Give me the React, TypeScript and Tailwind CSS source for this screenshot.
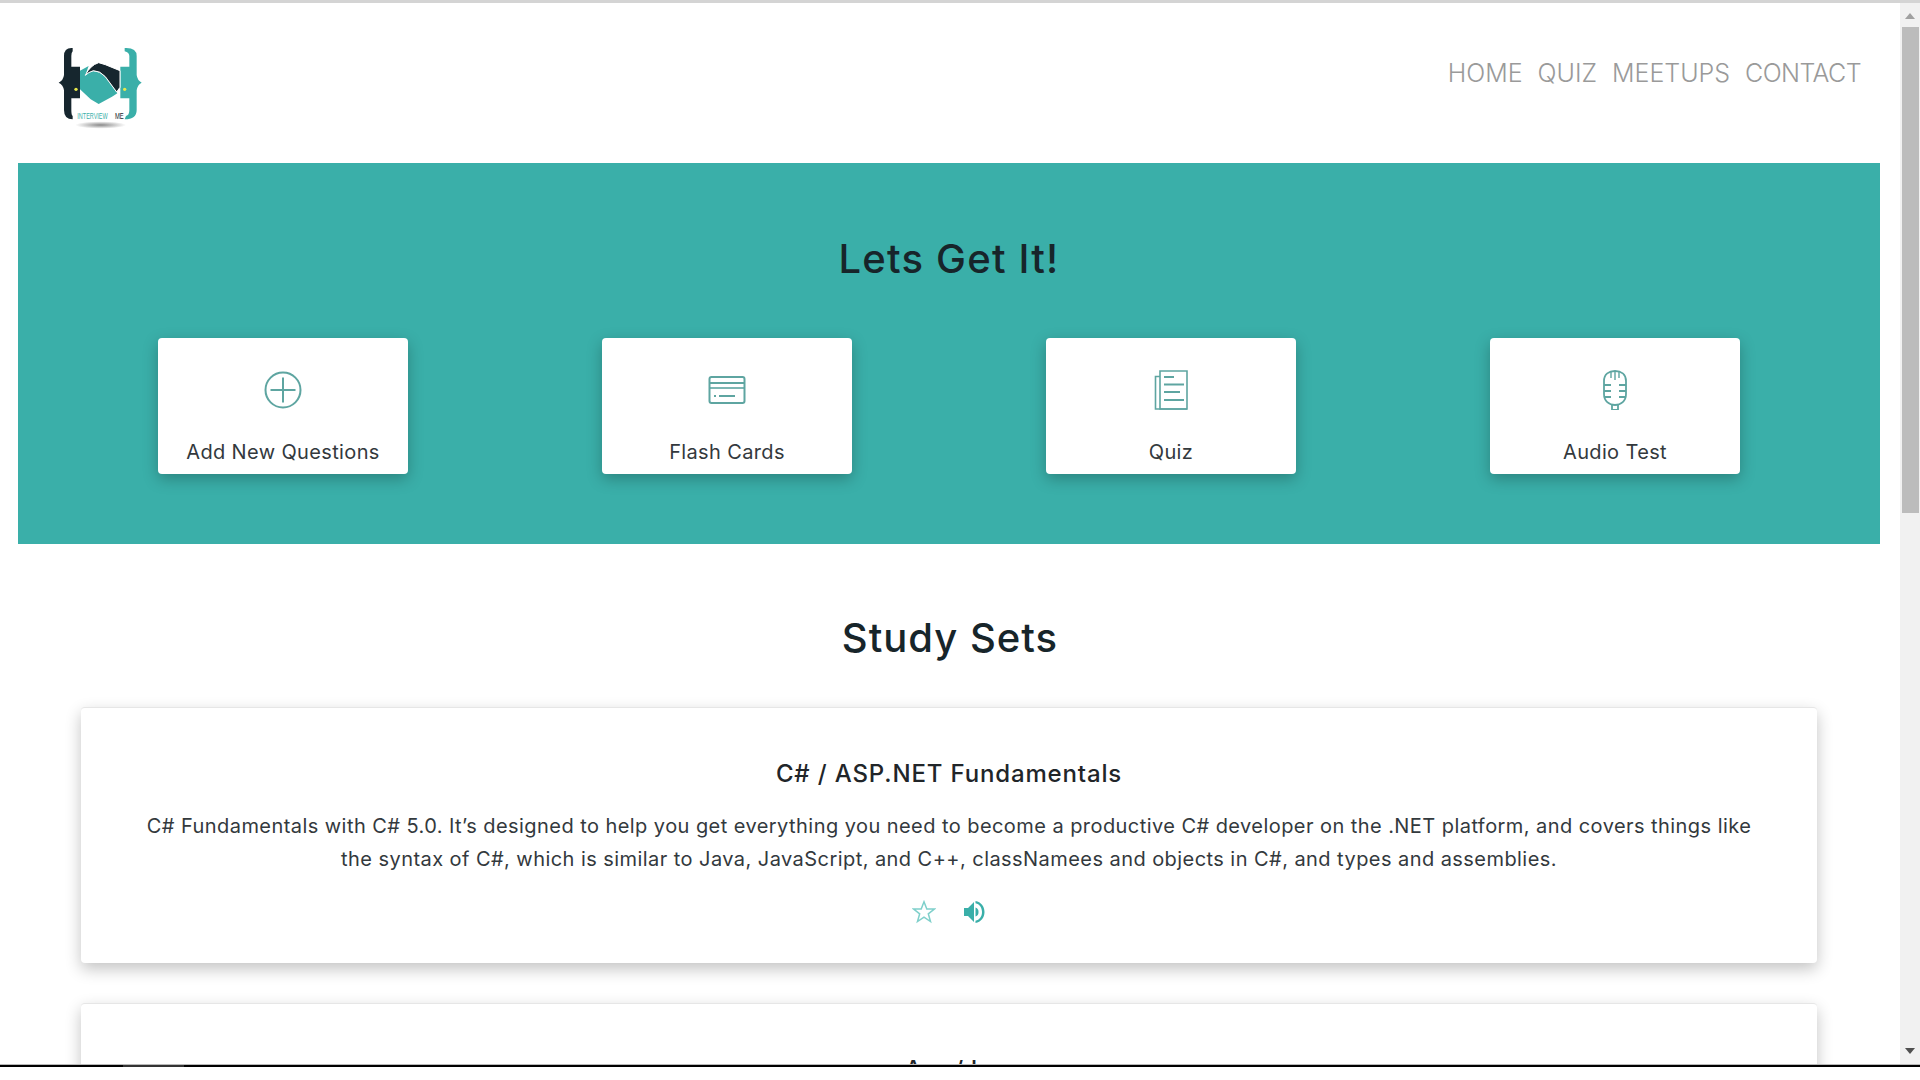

const font = "font-['Inter','Liberation_Sans',sans-serif]";

function Logo() {
  return (
    <svg width="120" height="110" viewBox="0 0 360 330" className="block">
      <defs>
        <radialGradient id="logoShadow">
          <stop offset="0%" stopColor="#8a8a8a" />
          <stop offset="100%" stopColor="#ffffff" />
        </radialGradient>
      </defs>
      <ellipse cx="182" cy="285" rx="76" ry="11" fill="url(#logoShadow)" />
      <path d="M98 54 Q72 52 72 78 V135 Q70 151 56 158 Q70 165 72 181 V240 Q72 268 98 268 V258 Q94 256 94 240 V205 H120 V110 H94 V78 Q94 68 98 64 Z" fill="#16262e" />
      <path d="M254 54 Q290 52 290 78 V135 Q292 151 305 158 Q292 165 290 181 V240 Q290 268 254 268 L258 258 Q268 256 268 240 V205 H241 V110 H268 V78 Q268 68 254 64 Z" fill="#3aafa9" />
      <path d="M120 122 L146 108 L136 136 Q146 126 160 124 Q180 124 196 142 L232 190 L216 200 L176 222 L152 208 L120 178 Z" fill="#3aafa9" />
      <path d="M136 136 Q150 106 176 98 L196 104 L240 122 V172 L230 186 L196 140 Q180 122 160 122 Q146 126 136 136 Z" fill="#16262e" stroke="#ffffff" strokeWidth="3" />
      <circle cx="108" cy="178" r="5" fill="#e8e84a" />
      <circle cx="254" cy="178" r="5" fill="#e8e84a" />
      <text transform="translate(112 266) scale(0.61 1)" fontSize="27" fontFamily="'Liberation Sans',sans-serif" fill="#3aafa9">INTERVIEW</text>
      <text transform="translate(225 266) scale(0.65 1)" fontSize="27" fontFamily="'Liberation Sans',sans-serif" fill="#16262e">ME</text>
    </svg>
  );
}

function PlusIcon() {
  return (
    <svg width="40" height="40" viewBox="0 0 40 40" fill="none" stroke="#5ea5a1" strokeWidth="2">
      <circle cx="20" cy="20" r="17.5" />
      <path d="M20 7.5V32.5M7.5 20H32.5" />
    </svg>
  );
}

function CardIcon() {
  return (
    <svg width="40" height="40" viewBox="0 0 40 40" fill="none" stroke="#5ea5a1" strokeWidth="2">
      <rect x="2.5" y="7" width="35" height="26" rx="2" />
      <path d="M2.5 13H37.5" />
      <path d="M2.5 18H37.5" strokeOpacity="0.8" />
      <path d="M7 26H9M12 26H28" />
    </svg>
  );
}

function QuizIcon() {
  return (
    <svg width="40" height="40" viewBox="0 0 40 40" fill="none" stroke="#5ea5a1" strokeWidth="2">
      <path d="M9 1H36V39H9Z" strokeWidth="1.6" />
      <path d="M9 6.5H4.5V39H36" strokeWidth="1.6" />
      <path d="M13 7H23M13 14.5H33M13 22H29M13 30H33" />
    </svg>
  );
}

function MicIcon() {
  return (
    <svg width="40" height="40" viewBox="0 0 40 40" fill="none" stroke="#5ea5a1" strokeWidth="1.8">
      <path d="M9 11C9 4 14 1 20 1S31 4 31 11V24C31 31 26 35 20 35S9 31 9 24Z" />
      <path d="M16 2V8M20 1.5V10M24 2V8" strokeWidth="1.4" />
      <path d="M9 15H16M24 15H31M9 21H16M24 21H31M9 27H16M24 27H31" />
      <path d="M17 35V40H23V35" />
    </svg>
  );
}

function CardLink({ label, icon }: { label: string; icon: React.ReactNode }) {
  return (
    <div className="flex h-[136px] w-[250px] flex-col items-center rounded-[4px] bg-white pt-[32px] shadow-[0_5px_15px_rgba(0,0,0,0.25)]">
      {icon}
      <div className="mt-[28px] text-[20px] leading-[28px] tracking-[0.36px] text-[#33393d]">{label}</div>
    </div>
  );
}

function Star() {
  return (
    <svg width="24" height="24" viewBox="0 0 24 24" fill="none" stroke="#7fd0cb" strokeWidth="1.5">
      <path d="M12 1.8L14.8 9H22.4L16.3 13.8L18.5 21.6L12 17.2L5.5 21.6L7.7 13.8L1.6 9H9.2Z" />
    </svg>
  );
}

function Speaker() {
  return (
    <svg width="22" height="24" viewBox="0 0 22 24" fill="#3aafa9">
      <path d="M1 8H5L11 2V22L5 16H1Z" />
      <path d="M12.5 7.5C15 8.5 15.5 10 15.5 12S15 15.5 12.5 16.5Z" />
      <path d="M12.5 1C18 2 21.5 6.5 21.5 12S18 22 12.5 23V20.8C16.5 20 19 16.5 19 12S16.5 4 12.5 3.2Z" />
    </svg>
  );
}

function StudyCard({ title, children }: { title: string; children?: React.ReactNode }) {
  return (
    <div className="ml-[81px] mr-[83px] rounded-[4px] border-t border-[#e6e6e6] bg-white px-[40px] pt-[50px] shadow-[0_6px_16px_rgba(0,0,0,0.24)]">
      <h3 className="text-center text-[24px] font-medium leading-[32px] tracking-[0.85px] text-[#212529]">{title}</h3>
      {children}
    </div>
  );
}

export default function App() {
  return (
    <div className={`${font} flex h-screen w-full flex-col overflow-hidden bg-white`}>
      <div className="h-[3px] shrink-0 bg-[#d4d4d4]" />
      <div className="flex min-h-0 flex-1">
        <main className="min-w-0 flex-1 overflow-hidden">
          <header className="flex h-[160px] items-start justify-between pr-[39px]">
            <div className="ml-[40px] mt-[27px]">
              <Logo />
            </div>
            <nav className="mt-[52px] flex gap-[15px] text-[25px] font-light leading-[36px] text-[#9a9a9a]">
              <span>HOME</span>
              <span>QUIZ</span>
              <span>MEETUPS</span>
              <span className="tracking-[-0.6px]">CONTACT</span>
            </nav>
          </header>
          <section className="mx-[18px] h-[381px] w-[1862px] bg-[#3aafa9] px-[140px] pt-[69px]">
            <h1 className="text-center text-[40px] font-[450] leading-[54px] tracking-[1.2px] text-[#17252a]">Lets Get It!</h1>
            <div className="mt-[52px] flex justify-between">
              <CardLink label="Add New Questions" icon={<PlusIcon />} />
              <CardLink label="Flash Cards" icon={<CardIcon />} />
              <CardLink label="Quiz" icon={<QuizIcon />} />
              <CardLink label="Audio Test" icon={<MicIcon />} />
            </div>
          </section>
          <h2 className="mt-[67px] text-center text-[40px] font-[450] leading-[54px] tracking-[1px] text-[#17252a]">Study Sets</h2>
          <div className="mt-[42px] flex flex-col gap-[40px]">
            <StudyCard title="C# / ASP.NET Fundamentals">
              <p className="mx-auto mt-[20px] max-w-[1630px] text-center text-[20px] leading-[33px] tracking-[0.44px] text-[#33393d]">
                C# Fundamentals with C# 5.0. It’s designed to help you get everything you need to become a productive C# developer on the .NET platform, and covers things like the syntax of C#, which is similar to Java, JavaScript, and C++, classNamees and objects in C#, and types and assemblies.
              </p>
              <div className="mt-[24px] flex h-[24px] items-center justify-center gap-[27px] pr-[2px]">
                <Star />
                <Speaker />
              </div>
              <div className="h-[39px]" />
            </StudyCard>
            <StudyCard title="Arc / lo" />
          </div>
        </main>
        <aside className="flex w-[20px] shrink-0 flex-col items-center bg-[#f1f1f1]">
          <div className="mt-[10px] h-0 w-0 border-x-[5px] border-b-[6px] border-x-transparent border-b-[#a0a0a0]" />
          <div className="mt-[8px] h-[486px] w-[17px] bg-[#bcbcbc]" />
          <div className="mt-auto mb-[10px] h-0 w-0 border-x-[5px] border-t-[6px] border-x-transparent border-t-[#505050]" />
        </aside>
      </div>
      <div className="h-[1px] shrink-0 bg-[#b8b8b8]" />
      <div className="flex h-[2px] shrink-0 bg-black">
        <div className="ml-[123px] h-full w-[61px] bg-[#333333]" />
      </div>
      <div className="h-[13px] shrink-0 bg-white" />
    </div>
  );
}
